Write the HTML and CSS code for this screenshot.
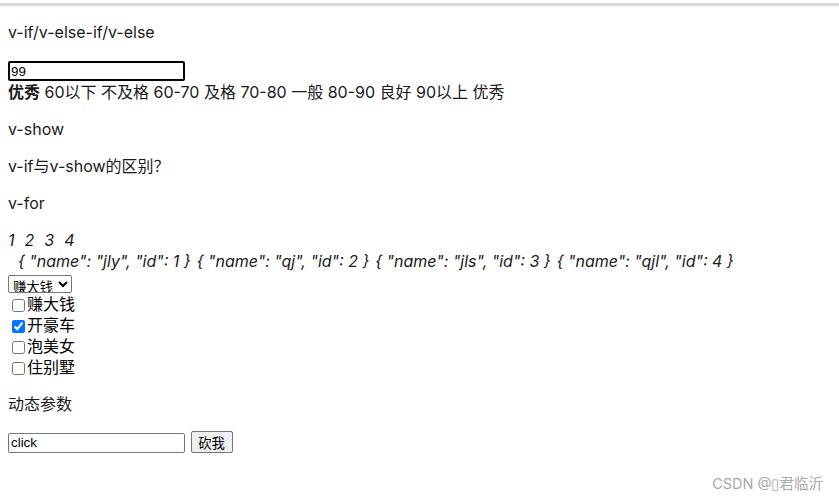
FILE: index.html
```html
<!DOCTYPE html>
<html lang="zh">
<head>
<meta charset="utf-8">
<title>Vue 指令</title>
<link rel="stylesheet" href="styles.css">
</head>
<body>
<div class="topshadow"></div>
<div id="app">
  <p>v-if/v-else-if/v-else</p>
  <div class="line">
    <input class="score" type="text" value="99"><br>
    <b>优秀</b> 60以下 不及格 60-70 及格 70-80 一般 80-90 良好 90以上 优秀
  </div>
  <p>v-show</p>
  <p>v-if与v-show的区别？</p>
  <p>v-for</p>
  <div class="italic nums"><span>1</span><span>2</span><span>3</span><span>4</span></div>
  <div class="italic objs"><span>{ "name": "jly", "id": 1 }</span><span>{ "name": "qj", "id": 2 }</span><span>{ "name": "jls", "id": 3 }</span><span>{ "name": "qjl", "id": 4 }</span></div>
  <div class="line">
    <select class="sel">
      <option selected>赚大钱</option>
      <option>开豪车</option>
      <option>泡美女</option>
      <option>住别墅</option>
    </select>
  </div>
  <div class="check"><input type="checkbox">赚大钱</div>
  <div class="check"><input type="checkbox" checked>开豪车</div>
  <div class="check"><input type="checkbox">泡美女</div>
  <div class="check"><input type="checkbox">住别墅</div>
  <p>动态参数</p>
  <div class="line">
    <input class="txt" type="text" value="click">
    <button class="btn">砍我</button>
  </div>
</div>
<div class="watermark">CSDN @▯君临沂</div>
</body>
</html>
```
FILE: styles.css
```css
html, body {
  background: #fff;
}
body {
  margin: 0;
  padding: 6px 8px 8px;
  font-family: Inter, "Noto Sans CJK SC", sans-serif;
  font-size: 16px;
  line-height: 21px;
  color: #1a1a1a;
}
.topshadow {
  position: fixed;
  top: 0;
  left: 0;
  right: 0;
  height: 8px;
  background: linear-gradient(to bottom, #fff 0, #fff 3px, #c4c4c4 4px, #d8d8d8 5px, #f0f0f0 6px, #fff 8px);
}
p {
  margin: 16px 0;
}
.line {
  line-height: 21px;
}
.score {
  font-family: "Liberation Sans", Arial, sans-serif;
  font-size: 13.33px;
  width: 177px;
  height: 20px;
  box-sizing: border-box;
  border: 2px solid #000;
  border-radius: 2px;
  padding: 0 1px;
  margin: 2px 0 1px;
  vertical-align: middle;
  color: #000;
}
.italic {
  font-style: italic;
}
.nums span {
  margin-right: 10px;
}
.objs {
  padding-left: 10px;
}
.objs span {
  margin-right: 6px;
}
.sel {
  font-family: "Noto Sans CJK SC", sans-serif;
  font-size: 13.33px;
  width: 64px;
  height: 18px;
  padding: 0;
  margin: 1px 0 1px;
  vertical-align: middle;
}
.check {
  color: #000;
  line-height: 21px;
}
.check input {
  margin: 3px 2px 3px 4px;
  vertical-align: -2px;
}
.txt {
  font-family: "Liberation Sans", Arial, sans-serif;
  font-size: 13.33px;
  width: 177px;
  height: 20px;
  box-sizing: border-box;
  border: 1px solid #767676;
  border-radius: 2px;
  padding: 1px 2px;
  margin: 1px 0 0;
  vertical-align: middle;
}
.btn {
  font-family: "Noto Sans CJK SC", sans-serif;
  font-size: 13.33px;
  width: 42px;
  height: 22px;
  padding: 0;
  margin-left: 1px;
  border: 1px solid #767676;
  border-radius: 2px;
  background: #efefef;
  vertical-align: middle;
}
.watermark {
  position: absolute;
  right: 16px;
  top: 474px;
  font-family: Inter, "Noto Sans CJK SC", sans-serif;
  font-size: 14.5px;
  line-height: 20px;
  color: #a8a8a8;
}
```
